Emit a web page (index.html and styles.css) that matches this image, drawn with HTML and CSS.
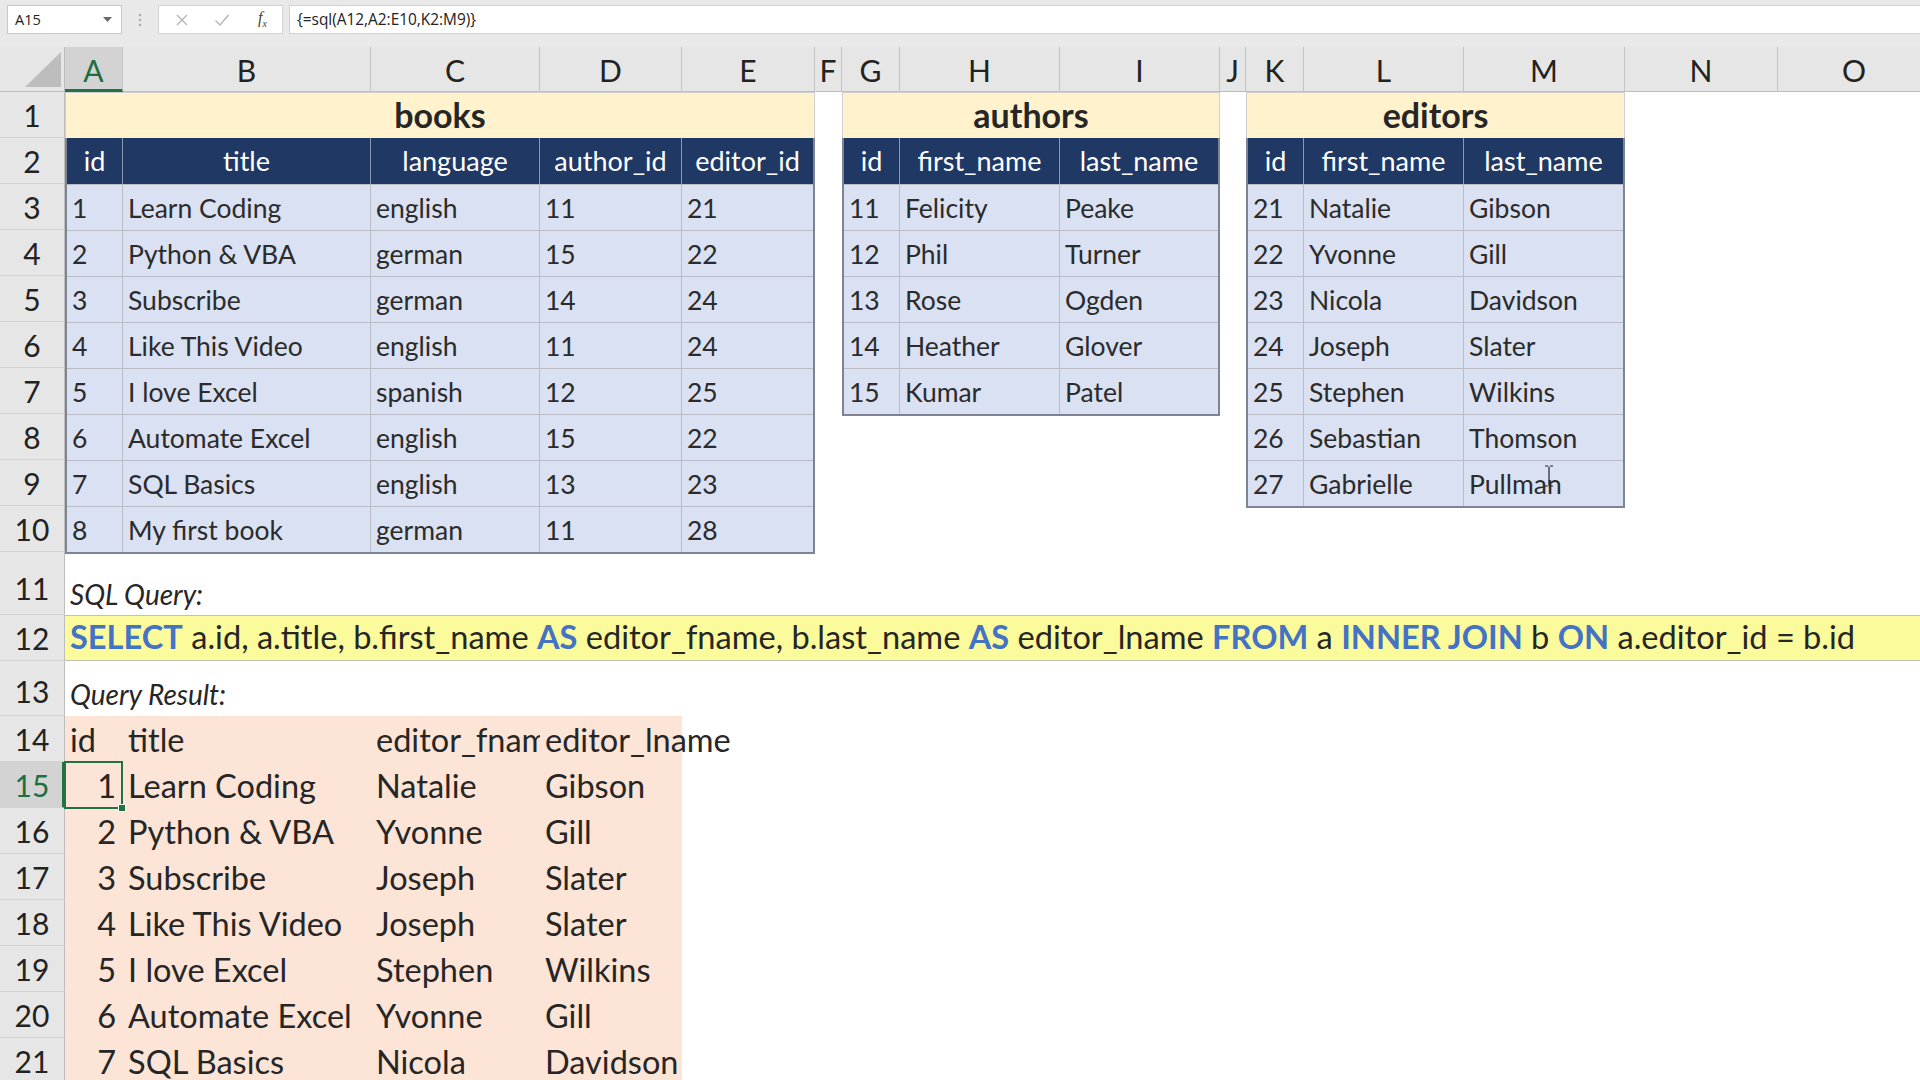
FILE: index.html
```html
<!DOCTYPE html>
<html>
<head>
<meta charset="utf-8">
<link rel="stylesheet" href="styles.css">
</head>
<body>
<div class="fbar">
  <div class="namebox"><span>A15</span><svg class="caret" width="9" height="5" viewBox="0 0 9 5"><path d="M0 0H9L4.5 5Z" fill="#6a6a6a"/></svg></div>
  <div class="dots"><svg width="4" height="14" viewBox="0 0 4 14"><circle cx="2" cy="2" r="1.2" fill="#a8a8a8"/><circle cx="2" cy="7" r="1.2" fill="#a8a8a8"/><circle cx="2" cy="12" r="1.2" fill="#a8a8a8"/></svg></div>
  <div class="btnbox">
    <svg class="ic" width="14" height="14" viewBox="0 0 14 14"><path d="M2 2L12 12M12 2L2 12" stroke="#b4b4b4" stroke-width="1.4"/></svg>
    <svg class="ic" width="16" height="14" viewBox="0 0 16 14"><path d="M1.5 7.5L6 12L14.5 2" stroke="#b4b4b4" stroke-width="1.4" fill="none"/></svg>
    <span class="fx"><i>f</i><sub>x</sub></span>
  </div>
  <div class="finput">{=sql(A12,A2:E10,K2:M9)}</div>
</div>

<div class="sheet">
  <div class="corner"><svg width="65" height="45" viewBox="0 0 65 45"><path d="M25 40H61V5Z" fill="#bdbdbd"/></svg></div>
  <div class="ch sel-col">A</div>
  <div class="ch">B</div>
  <div class="ch">C</div>
  <div class="ch">D</div>
  <div class="ch">E</div>
  <div class="ch">F</div>
  <div class="ch">G</div>
  <div class="ch">H</div>
  <div class="ch">I</div>
  <div class="ch">J</div>
  <div class="ch">K</div>
  <div class="ch">L</div>
  <div class="ch">M</div>
  <div class="ch">N</div>
  <div class="ch">O</div>

  <div class="rh r1">1</div>
  <div class="rh r2">2</div>
  <div class="rh r3">3</div>
  <div class="rh r4">4</div>
  <div class="rh r5">5</div>
  <div class="rh r6">6</div>
  <div class="rh r7">7</div>
  <div class="rh r8">8</div>
  <div class="rh r9">9</div>
  <div class="rh r10">10</div>
  <div class="rh r11">11</div>
  <div class="rh r12">12</div>
  <div class="rh r13">13</div>
  <div class="rh r14">14</div>
  <div class="rh r15 sel-row">15</div>
  <div class="rh r16">16</div>
  <div class="rh r17">17</div>
  <div class="rh r18">18</div>
  <div class="rh r19">19</div>
  <div class="rh r20">20</div>
  <div class="rh r21">21</div>

  <!-- books -->
  <div class="tbl books">
    <div class="title">books</div>
    <div class="body">
      <div class="hd">id</div><div class="hd">title</div><div class="hd">language</div><div class="hd">author_id</div><div class="hd">editor_id</div>
      <div class="c">1</div><div class="c">Learn Coding</div><div class="c">english</div><div class="c">11</div><div class="c">21</div>
      <div class="c">2</div><div class="c">Python &amp; VBA</div><div class="c">german</div><div class="c">15</div><div class="c">22</div>
      <div class="c">3</div><div class="c">Subscribe</div><div class="c">german</div><div class="c">14</div><div class="c">24</div>
      <div class="c">4</div><div class="c">Like This Video</div><div class="c">english</div><div class="c">11</div><div class="c">24</div>
      <div class="c">5</div><div class="c">I love Excel</div><div class="c">spanish</div><div class="c">12</div><div class="c">25</div>
      <div class="c">6</div><div class="c">Automate Excel</div><div class="c">english</div><div class="c">15</div><div class="c">22</div>
      <div class="c">7</div><div class="c">SQL Basics</div><div class="c">english</div><div class="c">13</div><div class="c">23</div>
      <div class="c">8</div><div class="c">My first book</div><div class="c">german</div><div class="c">11</div><div class="c">28</div>
    </div>
  </div>

  <!-- authors -->
  <div class="tbl authors">
    <div class="title">authors</div>
    <div class="body">
      <div class="hd">id</div><div class="hd">first_name</div><div class="hd">last_name</div>
      <div class="c">11</div><div class="c">Felicity</div><div class="c">Peake</div>
      <div class="c">12</div><div class="c">Phil</div><div class="c">Turner</div>
      <div class="c">13</div><div class="c">Rose</div><div class="c">Ogden</div>
      <div class="c">14</div><div class="c">Heather</div><div class="c">Glover</div>
      <div class="c">15</div><div class="c">Kumar</div><div class="c">Patel</div>
    </div>
  </div>

  <!-- editors -->
  <div class="tbl editors">
    <div class="title">editors</div>
    <div class="body">
      <div class="hd">id</div><div class="hd">first_name</div><div class="hd">last_name</div>
      <div class="c">21</div><div class="c">Natalie</div><div class="c">Gibson</div>
      <div class="c">22</div><div class="c">Yvonne</div><div class="c">Gill</div>
      <div class="c">23</div><div class="c">Nicola</div><div class="c">Davidson</div>
      <div class="c">24</div><div class="c">Joseph</div><div class="c">Slater</div>
      <div class="c">25</div><div class="c">Stephen</div><div class="c">Wilkins</div>
      <div class="c">26</div><div class="c">Sebastian</div><div class="c">Thomson</div>
      <div class="c">27</div><div class="c">Gabrielle</div><div class="c">Pullman</div>
    </div>
  </div>

  <div class="label l11">SQL Query:</div>
  <div class="sql"><b>SELECT</b> a.id, a.title, b.first_name <b>AS</b> editor_fname, b.last_name <b>AS</b> editor_lname <b>FROM</b> a <b>INNER JOIN</b> b <b>ON</b> a.editor_id = b.id</div>
  <div class="label l13">Query Result:</div>

  <div class="result">
    <div class="rc">id</div><div class="rc">title</div><div class="rc clip">editor_fname</div><div class="rc">editor_lname</div>
    <div class="rc num">1</div><div class="rc">Learn Coding</div><div class="rc">Natalie</div><div class="rc">Gibson</div>
    <div class="rc num">2</div><div class="rc">Python &amp; VBA</div><div class="rc">Yvonne</div><div class="rc">Gill</div>
    <div class="rc num">3</div><div class="rc">Subscribe</div><div class="rc">Joseph</div><div class="rc">Slater</div>
    <div class="rc num">4</div><div class="rc">Like This Video</div><div class="rc">Joseph</div><div class="rc">Slater</div>
    <div class="rc num">5</div><div class="rc">I love Excel</div><div class="rc">Stephen</div><div class="rc">Wilkins</div>
    <div class="rc num">6</div><div class="rc">Automate Excel</div><div class="rc">Yvonne</div><div class="rc">Gill</div>
    <div class="rc num">7</div><div class="rc">SQL Basics</div><div class="rc">Nicola</div><div class="rc">Davidson</div>
  </div>

  <div class="selbox"></div>
</div>

<svg class="ibeam" width="10" height="22" viewBox="0 0 10 22"><path d="M1 1H4M6 1H9M5 1.5V20.5M1 21H4M6 21H9" stroke="#222" stroke-width="1.2" fill="none"/></svg>
</body>
</html>
```

FILE: styles.css
```css
html, body {
  margin: 0;
  padding: 0;
}
body {
  width: 1920px;
  height: 1080px;
  overflow: hidden;
  background: #ffffff;
  font-family: Lato, "Open Sans", sans-serif;
  color: #262626;
  position: relative;
}

/* formula bar */
.fbar {
  height: 47px;
  background: #e9e9e9;
  display: flex;
  align-items: flex-start;
  padding-top: 5px;
  box-sizing: border-box;
}
.namebox {
  margin-left: 7px;
  width: 115px;
  height: 29px;
  background: #fff;
  border: 1px solid #c8c8c8;
  box-sizing: border-box;
  display: flex;
  align-items: center;
  justify-content: space-between;
  padding: 0 9px 0 7px;
  font: 14.5px "Open Sans", sans-serif;
  color: #222;
}
.dots {
  width: 36px;
  height: 29px;
  display: flex;
  align-items: center;
  justify-content: center;
}
.btnbox {
  width: 125px;
  height: 29px;
  background: #fff;
  border: 1px solid #d2d2d2;
  box-sizing: border-box;
  display: flex;
  align-items: center;
  padding-left: 16px;
  gap: 25px;
}
.fx {
  font-family: "Liberation Serif", serif;
  font-size: 16px;
  color: #444;
  margin-left: 3px;
}
.fx sub {
  font-size: 10px;
  font-style: italic;
}
.finput {
  flex: 1;
  margin-left: 6px;
  height: 29px;
  background: #fff;
  border: 1px solid #d2d2d2;
  border-right: none;
  box-sizing: border-box;
  padding-left: 7px;
  display: flex;
  align-items: center;
  font: 15.4px "Open Sans", sans-serif;
  color: #222;
}

/* sheet grid */
.sheet {
  display: grid;
  grid-template-columns: 65px 58px 248px 169px 142px 133px 27px 58px 160px 160px 26px 58px 160px 161px 153px 153px;
  grid-template-rows: 45px repeat(10, 46px) 63px 46px 55px repeat(8, 46px);
}
.corner {
  grid-column: 1;
  grid-row: 1;
  background: #e6e6e6;
  border-right: 1px solid #bdbdbd;
  border-bottom: 1px solid #bdbdbd;
  box-sizing: border-box;
}
.corner svg { display: block; }
.ch {
  grid-row: 1;
  background: #e6e6e6;
  border-right: 1px solid #c4c4c4;
  border-bottom: 1px solid #bdbdbd;
  box-sizing: border-box;
  display: flex;
  align-items: center;
  justify-content: center;
  font-size: 30px;
  color: #222;
  padding-top: 2px;
}
.ch.sel-col {
  background: #d3d3d3;
  color: #1e6e42;
  border-bottom: 3px solid #217346;
  padding-top: 4px;
}
.rh {
  grid-column: 1;
  background: #e6e6e6;
  border-right: 1px solid #bdbdbd;
  border-bottom: 1px solid #d2d2d2;
  box-sizing: border-box;
  display: flex;
  align-items: center;
  justify-content: center;
  font-size: 30px;
  color: #222;
}
.rh.sel-row {
  background: #d3d3d3;
  color: #1e6e42;
  border-right: 3px solid #217346;
  padding-left: 2px;
}
.r1 { grid-row: 2; } .r2 { grid-row: 3; } .r3 { grid-row: 4; } .r4 { grid-row: 5; }
.r5 { grid-row: 6; } .r6 { grid-row: 7; } .r7 { grid-row: 8; } .r8 { grid-row: 9; }
.r9 { grid-row: 10; } .r10 { grid-row: 11; } .r11 { grid-row: 12; align-items: flex-end; padding-bottom: 8px; }
.r12 { grid-row: 13; } .r13 { grid-row: 14; align-items: flex-end; padding-bottom: 6px; }
.r14 { grid-row: 15; } .r15 { grid-row: 16; } .r16 { grid-row: 17; } .r17 { grid-row: 18; }
.r18 { grid-row: 19; } .r19 { grid-row: 20; } .r20 { grid-row: 21; } .r21 { grid-row: 22; }

/* tables */
.tbl {
  display: grid;
  grid-template-rows: 46px 1fr;
  align-self: start;
}
.books { grid-column: 2 / 7; grid-row: 2 / 12; }
.authors { grid-column: 8 / 11; grid-row: 2 / 9; }
.editors { grid-column: 12 / 15; grid-row: 2 / 11; }

.title {
  background: #fff2cc;
  border: 1px solid #cfcfcf;
  border-bottom: none;
  box-sizing: border-box;
  display: flex;
  align-items: center;
  justify-content: center;
  font-weight: bold;
  font-size: 34px;
  color: #262626;
  padding-bottom: 2px;
}
.body {
  display: grid;
  grid-auto-rows: 46px;
  border: 2px solid #7e8493;
  border-top: none;
  box-sizing: border-box;
  background: #d9e1f2;
}
.books .body { grid-template-columns: 56px 248px 169px 142px 1fr; }
.authors .body, .editors .body { grid-template-columns: 56px 160px 1fr; }

.hd {
  background: #203864;
  color: #ffffff;
  display: flex;
  align-items: center;
  justify-content: center;
  font-size: 27px;
  border-right: 1px solid #8c98b4;
  box-sizing: border-box;
  padding-bottom: 2px;
}
.c {
  display: flex;
  align-items: center;
  padding-left: 5px;
  font-size: 26.5px;
  color: #2b2b2b;
  border-right: 1px solid #b9bcc4;
  border-top: 1px solid #b9bcc4;
  box-sizing: border-box;
  white-space: nowrap;
}
.books .hd:nth-child(5n), .books .c:nth-child(5n),
.authors .hd:nth-child(3n), .authors .c:nth-child(3n),
.editors .hd:nth-child(3n), .editors .c:nth-child(3n) {
  border-right: none;
}

/* SQL rows */
.label {
  grid-column: 2 / 8;
  font-style: italic;
  font-size: 28px;
  display: flex;
  align-items: flex-end;
  padding-left: 5px;
  color: #262626;
}
.l11 { grid-row: 12; padding-bottom: 4px; }
.l13 { grid-row: 14; padding-bottom: 5px; }
.sql {
  grid-column: 2 / -1;
  grid-row: 13;
  background: #fbfb9b;
  border-top: 1px solid #c2c2b0;
  border-bottom: 1px solid #c2c2b0;
  box-sizing: border-box;
  padding-left: 5px;
  font-size: 32.6px;
  line-height: 42px;
  white-space: nowrap;
  color: #262626;
}
.sql b {
  color: #4472c4;
}

/* result */
.result {
  grid-column: 2 / 6;
  grid-row: 15 / 23;
  display: grid;
  grid-template-columns: 58px 248px 169px 142px;
  grid-auto-rows: 46px;
  background: #fce4d6;
}
.rc {
  display: flex;
  align-items: center;
  padding-left: 5px;
  padding-top: 1px;
  font-size: 32.5px;
  white-space: nowrap;
  color: #262626;
}
.rc.clip { overflow: hidden; }
.rc.num {
  justify-content: flex-end;
  padding-left: 0;
  padding-right: 7px;
}

.selbox {
  grid-column: 2;
  grid-row: 16;
  margin: -1px 0 -1px -1px;
  border: 2px solid #217346;
  position: relative;
  z-index: 2;
}
.selbox::after {
  content: "";
  position: absolute;
  right: -5px;
  bottom: -5px;
  width: 6px;
  height: 6px;
  background: #217346;
  border: 1px solid #fff;
}

.ibeam {
  position: absolute;
  left: 1544px;
  top: 465px;
}
```
